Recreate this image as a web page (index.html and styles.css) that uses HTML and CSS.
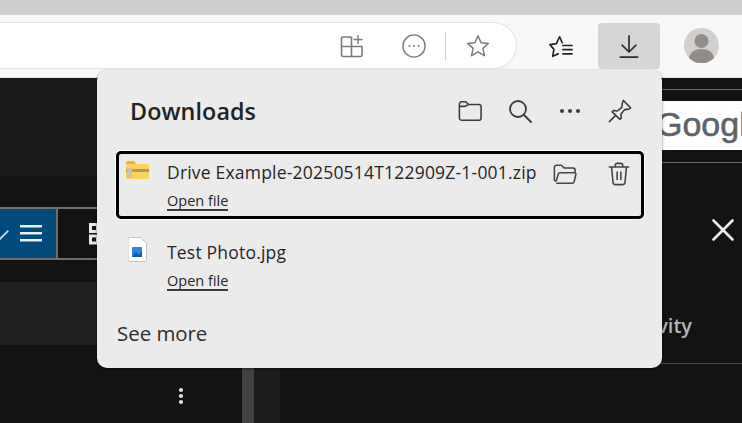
FILE: index.html
```html
<!DOCTYPE html>
<html lang="en">
<head>
    <meta charset="UTF-8">
    <title>Downloads</title>
    <link rel="stylesheet" href="styles.css">
</head>
<body>
    <div class="tabstrip"></div>

    <div class="toolbar">
        <div class="address">
            <svg class="icon" viewBox="0 0 24 24" fill="none" stroke="#7a7a7a" stroke-width="1.6"><path d="M11.5 3H3a1.5 1.5 0 0 0-1.5 1.500V21A1.500 1.500 0 0 0 3 22.500h17.500A1.500 1.500 0 0 0 22 21V12.500H1.500M11.500 3V22.500"/><path d="M18 1v9M13.500 5.500h9" stroke-width="1.400"/></svg>
            <svg class="icon gap-wide" viewBox="0 0 26 26" fill="none" stroke="#7a7a7a" stroke-width="1.500"><circle cx="13" cy="13" r="12"/><circle cx="8" cy="13" r="1.100" fill="#7a7a7a" stroke="none"/><circle cx="13" cy="13" r="1.100" fill="#7a7a7a" stroke="none"/><circle cx="18" cy="13" r="1.100" fill="#7a7a7a" stroke="none"/></svg>
            <span class="address-sep"></span>
            <svg class="icon" viewBox="0 0 26 26" fill="none" stroke="#7a7a7a" stroke-width="1.600" stroke-linejoin="round"><path d="M13 2l3.300 7.400 8 .8-6 5.400 1.700 7.900-7-4.100-7 4.100 1.700-7.900-6-5.400 8-.8z"/></svg>
        </div>
        <svg class="icon fav" viewBox="0 0 26 26" fill="none" stroke="#222" stroke-width="1.800" stroke-linejoin="round" stroke-linecap="round"><path d="M9 22l-5 2.200 1.300-7.600L1 11.500l7-1L11.500 3l2.800 6.500"/><path d="M9 22l1-.6M15 12.500h10M15 17h10M15 21.500h10" /></svg>
        <div class="download-btn">
            <svg class="icon" viewBox="0 0 24 26" fill="none" stroke="#2b2b2b" stroke-width="1.800" stroke-linecap="round" stroke-linejoin="round"><path d="M12 2v17M4.500 12l7.500 7.500 7.500-7.500"/><path d="M2.500 25h19"/></svg>
        </div>
        <div class="avatar">
            <svg viewBox="0 0 35 35"><circle cx="17.500" cy="17.500" r="17.500" fill="#d2d0ce"/><circle cx="17.500" cy="13" r="7" fill="#8f8c8a"/><path d="M5 30c1-6 6-9 12.500-9S29 24 30 30a17.500 17.500 0 0 1-25 0z" fill="#8f8c8a"/></svg>
        </div>
    </div>

    <div class="page">
        <div class="page-left">
            <div class="left-head"></div>
            <div class="left-gap"></div>
            <div class="view-row">
                <div class="view-btn active">
                    <svg class="check" viewBox="0 0 12 14" fill="none" stroke="#cfe6f5" stroke-width="2"><path d="M-3 12l3 1L10 3"/></svg>
                    <svg class="burger" viewBox="0 0 22 17" fill="#e4f2fb"><rect y="0" width="22" height="2.500"/><rect y="7" width="22" height="2.500"/><rect y="14" width="22" height="2.500"/></svg>
                </div>
                <div class="view-btn">
                    <svg class="grid-icon" viewBox="0 0 22 22" fill="none" stroke="#e8e8e8" stroke-width="3"><rect x="1.500" y="1.500" width="7" height="7"/><rect x="1.500" y="13" width="7" height="7"/><rect x="13" y="1.500" width="7" height="7"/><rect x="13" y="13" width="7" height="7"/></svg>
                </div>
            </div>
            <div class="left-gap2"></div>
            <div class="table-head"></div>
            <div class="table-row">
                <svg class="kebab" viewBox="0 0 6 18" fill="#e0e0e0"><circle cx="3" cy="3" r="2.100"/><circle cx="3" cy="9" r="2.100"/><circle cx="3" cy="15" r="2.100"/></svg>
            </div>
        </div>
        <div class="scroll-track"></div>
        <div class="scroll-side"></div>
        <div class="page-right">
            <div class="search-wrap"><div class="search-band"><span class="logo-text">Google</span></div></div>
            <div class="close-row">
                <svg class="close" viewBox="0 0 22 22" stroke="#eee" stroke-width="2.600" stroke-linecap="round"><path d="M1.500 1.500l19 19M20.500 1.500l-19 19"/></svg>
            </div>
            <div class="activity">Activity</div>
            <div class="panel-line"></div>
        </div>
    </div>

    <div class="popup">
        <div class="popup-head">
            <h2>Downloads</h2>
            <div class="head-icons">
                <svg class="icon" viewBox="0 0 26 24" fill="none" stroke="#3c3c3c" stroke-width="1.700" stroke-linejoin="round"><path d="M1.500 4.500A2.500 2.500 0 0 1 4 2h4.500l3 3H22.500A2.500 2.500 0 0 1 25 7.500V19.500A2.500 2.500 0 0 1 22.500 22H4A2.500 2.500 0 0 1 1.500 19.500zM1.500 7h6l4-2"/></svg>
                <svg class="icon" viewBox="0 0 24 24" fill="none" stroke="#3c3c3c" stroke-width="1.800" stroke-linecap="round"><circle cx="10" cy="10" r="8"/><path d="M16 16l7 7"/></svg>
                <svg class="icon" viewBox="0 0 24 24" fill="#3c3c3c"><circle cx="4" cy="12" r="2"/><circle cx="12" cy="12" r="2"/><circle cx="20" cy="12" r="2"/></svg>
                <svg class="icon" viewBox="0 0 26 26" fill="none" stroke="#3c3c3c" stroke-width="1.700" stroke-linejoin="round" stroke-linecap="round"><path d="M16.500 1.500l8 8-2 1.500-4.500.5-4 5 .5 4-1.500 1.500L4.500 14 6 12.500l4 .5 5-4 .5-4.500zM8 18l-6.500 6.500"/></svg>
            </div>
        </div>

        <div class="item selected">
            <svg class="file-icon" viewBox="0 0 23 18"><path d="M0 2a2 2 0 0 1 2-2h6l2 3H0z" fill="#f2b01e"/><rect y="3" width="23" height="15" rx="1" fill="#fbd35c"/><rect y="8" width="23" height="3" fill="#b59a4d"/><rect x="1" y="7" width="5" height="10" fill="#c9c3ae"/></svg>
            <div class="item-text">
                <div class="item-name">Drive Example-20250514T122909Z-1-001.zip</div>
                <a class="open-file">Open file</a>
            </div>
            <div class="item-actions">
                <svg class="icon" viewBox="0 0 26 24" fill="none" stroke="#454545" stroke-width="1.700" stroke-linejoin="round"><path d="M1.500 19V5A2.500 2.500 0 0 1 4 2.500h5l3 3h9.500A2.500 2.500 0 0 1 24 8v2"/><path d="M3.500 22h17.500a2 2 0 0 0 1.800-1.400l2-8a1.600 1.600 0 0 0-1.600-2H7.500a2 2 0 0 0-1.800 1.400L3.500 19.500a1.800 1.800 0 0 1-2-1"/></svg>
                <svg class="icon" viewBox="0 0 24 26" fill="none" stroke="#454545" stroke-width="1.700" stroke-linecap="round" stroke-linejoin="round"><path d="M1.500 5.500h21M8 5.500V3.500a2 2 0 0 1 2-2h4a2 2 0 0 1 2 2v2M4 5.500l1.500 17a2.500 2.500 0 0 0 2.500 2h8a2.500 2.500 0 0 0 2.500-2l1.500-17M10 11v8M14 11v8"/></svg>
            </div>
        </div>

        <div class="item">
            <svg class="file-icon photo" viewBox="0 0 19 25"><path d="M1.500.5h11l6 6v16.500a1.500 1.500 0 0 1-1.500 1.500H1.500A1.500 1.500 0 0 1 0 23V2A1.500 1.500 0 0 1 1.500.5z" fill="#fff" stroke="#c2c2c2"/><rect x="4" y="10" width="10" height="10" rx="1" fill="#2b86e0"/><path d="M4 20l4-5 3 3 3-4v6z" fill="#0f58a8"/></svg>
            <div class="item-text">
                <div class="item-name">Test Photo.jpg</div>
                <a class="open-file">Open file</a>
            </div>
        </div>

        <div class="see-more">See more</div>
    </div>
</body>
</html>
```

FILE: styles.css
```css
html, body {
    margin: 0;
    height: 423px;
    overflow: hidden;
}
body {
    position: relative;
    background-color: #131313;
    font-family: "Open Sans", "Noto Sans", Arial, sans-serif;
    color: #262626;
}
.icon {
    display: block;
    width: 24px;
    height: 24px;
    flex: none;
}

/* browser chrome */
.tabstrip {
    height: 15px;
    background-color: #cdcdcd;
}
.toolbar {
    display: flex;
    align-items: center;
    height: 63px;
    box-sizing: border-box;
    padding-bottom: 1px;
    background-color: #f8f8f8;
    border-bottom: 1px solid #e4e4e4;
}
.address {
    display: flex;
    align-items: center;
    justify-content: flex-end;
    width: 517px;
    height: 47px;
    box-sizing: border-box;
    padding-right: 26px;
    background-color: #fff;
    border: 1px solid #e2e2e2;
    border-left: 0;
    border-radius: 0 24px 24px 0;
}
.gap-wide {
    margin-left: 38px;
}
.address-sep {
    width: 1px;
    height: 28px;
    margin: 0 20px 0 19px;
    background-color: #d0d0d0;
}
.fav {
    margin-left: 32px;
}
.download-btn {
    display: flex;
    align-items: center;
    justify-content: center;
    width: 62px;
    height: 46px;
    margin-left: 25px;
    background-color: #d6d6d6;
    border-radius: 4px;
}
.avatar {
    width: 35px;
    height: 35px;
    margin-left: 24px;
}
.avatar svg {
    display: block;
}

/* dark page behind the popup */
.page {
    display: flex;
    height: 345px;
}
.page-left {
    width: 242px;
    flex: none;
}
.left-head {
    height: 98px;
    background-color: #1a1a1a;
}
.left-gap {
    height: 31px;
}
.view-row {
    display: flex;
    height: 49px;
    border-top: 2px solid #6e6e6e;
    border-bottom: 2px solid #6e6e6e;
}
.view-btn {
    display: flex;
    align-items: center;
    width: 58px;
    padding-left: 31px;
    box-sizing: border-box;
    border-right: 2px solid #6e6e6e;
}
.view-btn.active {
    padding-left: 0;
    background-color: #004a7c;
}
.check {
    width: 10px;
    height: 14px;
    margin-right: 10px;
}
.burger {
    width: 22px;
    height: 17px;
}
.grid-icon {
    width: 22px;
    height: 22px;
}
.left-gap2 {
    height: 22px;
}
.table-head {
    height: 63px;
    background-color: #1e2022;
}
.table-row {
    display: flex;
    justify-content: center;
    padding-top: 42px;
    padding-left: 120px;
}
.kebab {
    width: 6px;
    height: 18px;
}
.scroll-track {
    width: 12px;
    flex: none;
    background-color: #3f413f;
}
.scroll-side {
    width: 26px;
    flex: none;
    background-color: #1c1c1c;
}
.page-right {
    flex: 1;
    min-width: 0;
}
.search-wrap {
    height: 85px;
    box-sizing: border-box;
    padding-top: 23px;
    background: linear-gradient(#131313 11px, #6b6b6b 11px, #6b6b6b 12px, #131313 12px) 0 0 / 100% 24px no-repeat,
                linear-gradient(#131313 12px, #6b6b6b 12px, #6b6b6b 13px, #131313 13px) 0 72px / 100% 13px no-repeat;
}
.search-band {
    height: 49px;
    padding-left: 376px;
    box-sizing: border-box;
    overflow: hidden;
    background-color: #fff;
    white-space: nowrap;
}
.logo-text {
    font-family: "Liberation Sans", Arial, sans-serif;
    font-size: 34px;
    line-height: 47px;
    color: #5f6368;
    -webkit-text-stroke: 0.6px #5f6368;
}
.close-row {
    display: flex;
    justify-content: flex-end;
    padding: 56px 8px 0 0;
}
.close {
    width: 22px;
    height: 22px;
}
.activity {
    margin-top: 72px;
    padding-right: 50px;
    text-align: right;
    font-size: 20px;
    line-height: 26px;
    font-weight: 600;
    color: #b4b4b4;
}
.panel-line {
    height: 1px;
    margin-top: 24px;
    background-color: #4a4a4a;
}

/* downloads flyout */
.popup {
    position: absolute;
    left: 97px;
    top: 70px;
    width: 565px;
    height: 298px;
    box-sizing: border-box;
    padding: 0 18px 0 19px;
    background-color: #ebebeb;
    border-radius: 10px;
    box-shadow: 0 1px 3px rgba(0, 0, 0, 0.5);
}
.popup-head {
    display: flex;
    align-items: center;
    justify-content: space-between;
    height: 81px;
    padding: 0 12px 0 14px;
}
.popup-head h2 {
    margin: 0;
    font-size: 23.300px;
    letter-spacing: 0.1px;
    font-weight: 600;
    color: #222;
}
.head-icons {
    display: flex;
    gap: 26px;
}
.item {
    display: flex;
    align-items: flex-start;
    height: 68px;
    box-sizing: border-box;
    padding: 7px 10px 0 7px;
    border: 3px solid transparent;
    border-radius: 5px;
}
.item.selected {
    border-color: #000;
    box-shadow: 0 0 0 1px #fff;
    margin-bottom: 12px;
}
.file-icon {
    width: 23px;
    height: 18px;
    flex: none;
}
.file-icon.photo {
    width: 19px;
    height: 25px;
    margin: -4px 2px 0 2px;
}
.item-text {
    flex: 1;
    margin-left: 18px;
    margin-top: -1px;
}
.item-name {
    font-size: 17.500px;
    line-height: 24px;
    white-space: nowrap;
    letter-spacing: 0.2px;
}
.open-file {
    display: inline-block;
    margin-top: 9px;
    font-size: 14.500px;
    line-height: 16px;
    color: #262626;
    border-bottom: 2px solid #3a3a3a;
}
.item-actions {
    display: flex;
    gap: 30px;
    margin-top: 1px;
}
.see-more {
    margin-top: 21px;
    margin-left: 1px;
    font-size: 20.400px;
    line-height: 26px;
    font-weight: 500;
    color: #2e2e2e;
}
```
